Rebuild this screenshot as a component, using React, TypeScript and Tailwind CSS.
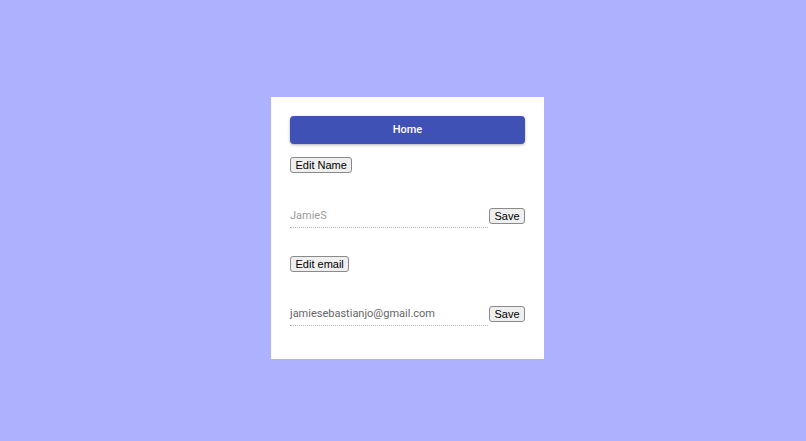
import React from "react";

const NativeBtn = ({ children, className = "" }: { children: React.ReactNode; className?: string }) => (
  <button
    className={`h-[16px] px-[4.5px] border border-[#8a8a8a] rounded-[3px] bg-[#efefef] text-[11px] leading-[14px] text-black flex items-center justify-center ${className}`}
    style={{ fontFamily: "'Liberation Sans', Arial, sans-serif" }}
  >
    {children}
  </button>
);

const Row = ({ value, color, className = "" }: { value: string; color: string; className?: string }) => (
  <div className={`flex items-start h-[20px] ${className}`}>
    <div className="w-[198px] h-[20px] border-b border-dotted border-[#b8b8b8] pt-[1px]">
      <span className={`block text-[11px] leading-[13px] ${color}`} style={{ fontFamily: "Roboto, sans-serif" }}>
        {value}
      </span>
    </div>
    <NativeBtn className="ml-[1px] w-[36px]">Save</NativeBtn>
  </div>
);

export default function App() {
  return (
    <div className="w-[806px] h-[441px] bg-[#aeb1fe] pt-[97px] pl-[271px]">
      <div className="w-[273px] h-[262px] bg-white px-[19px] pt-[19px] flex flex-col items-start">
        <div
          className="w-[235px] h-[28px] rounded-[4px] bg-[#3f51b5] shadow-[0_1px_3px_rgba(0,0,0,0.3)] flex items-center justify-center text-white text-[11px] font-medium"
          style={{ fontFamily: "Roboto, sans-serif" }}
        >
          Home
        </div>
        <NativeBtn className="mt-[13px]">Edit Name</NativeBtn>
        <Row className="mt-[35px]" value="JamieS" color="text-[#9b9b9b]" />
        <NativeBtn className="mt-[28px]">Edit email</NativeBtn>
        <Row className="mt-[34px]" value="jamiesebastianjo@gmail.com" color="text-[#666666]" />
      </div>
    </div>
  );
}
